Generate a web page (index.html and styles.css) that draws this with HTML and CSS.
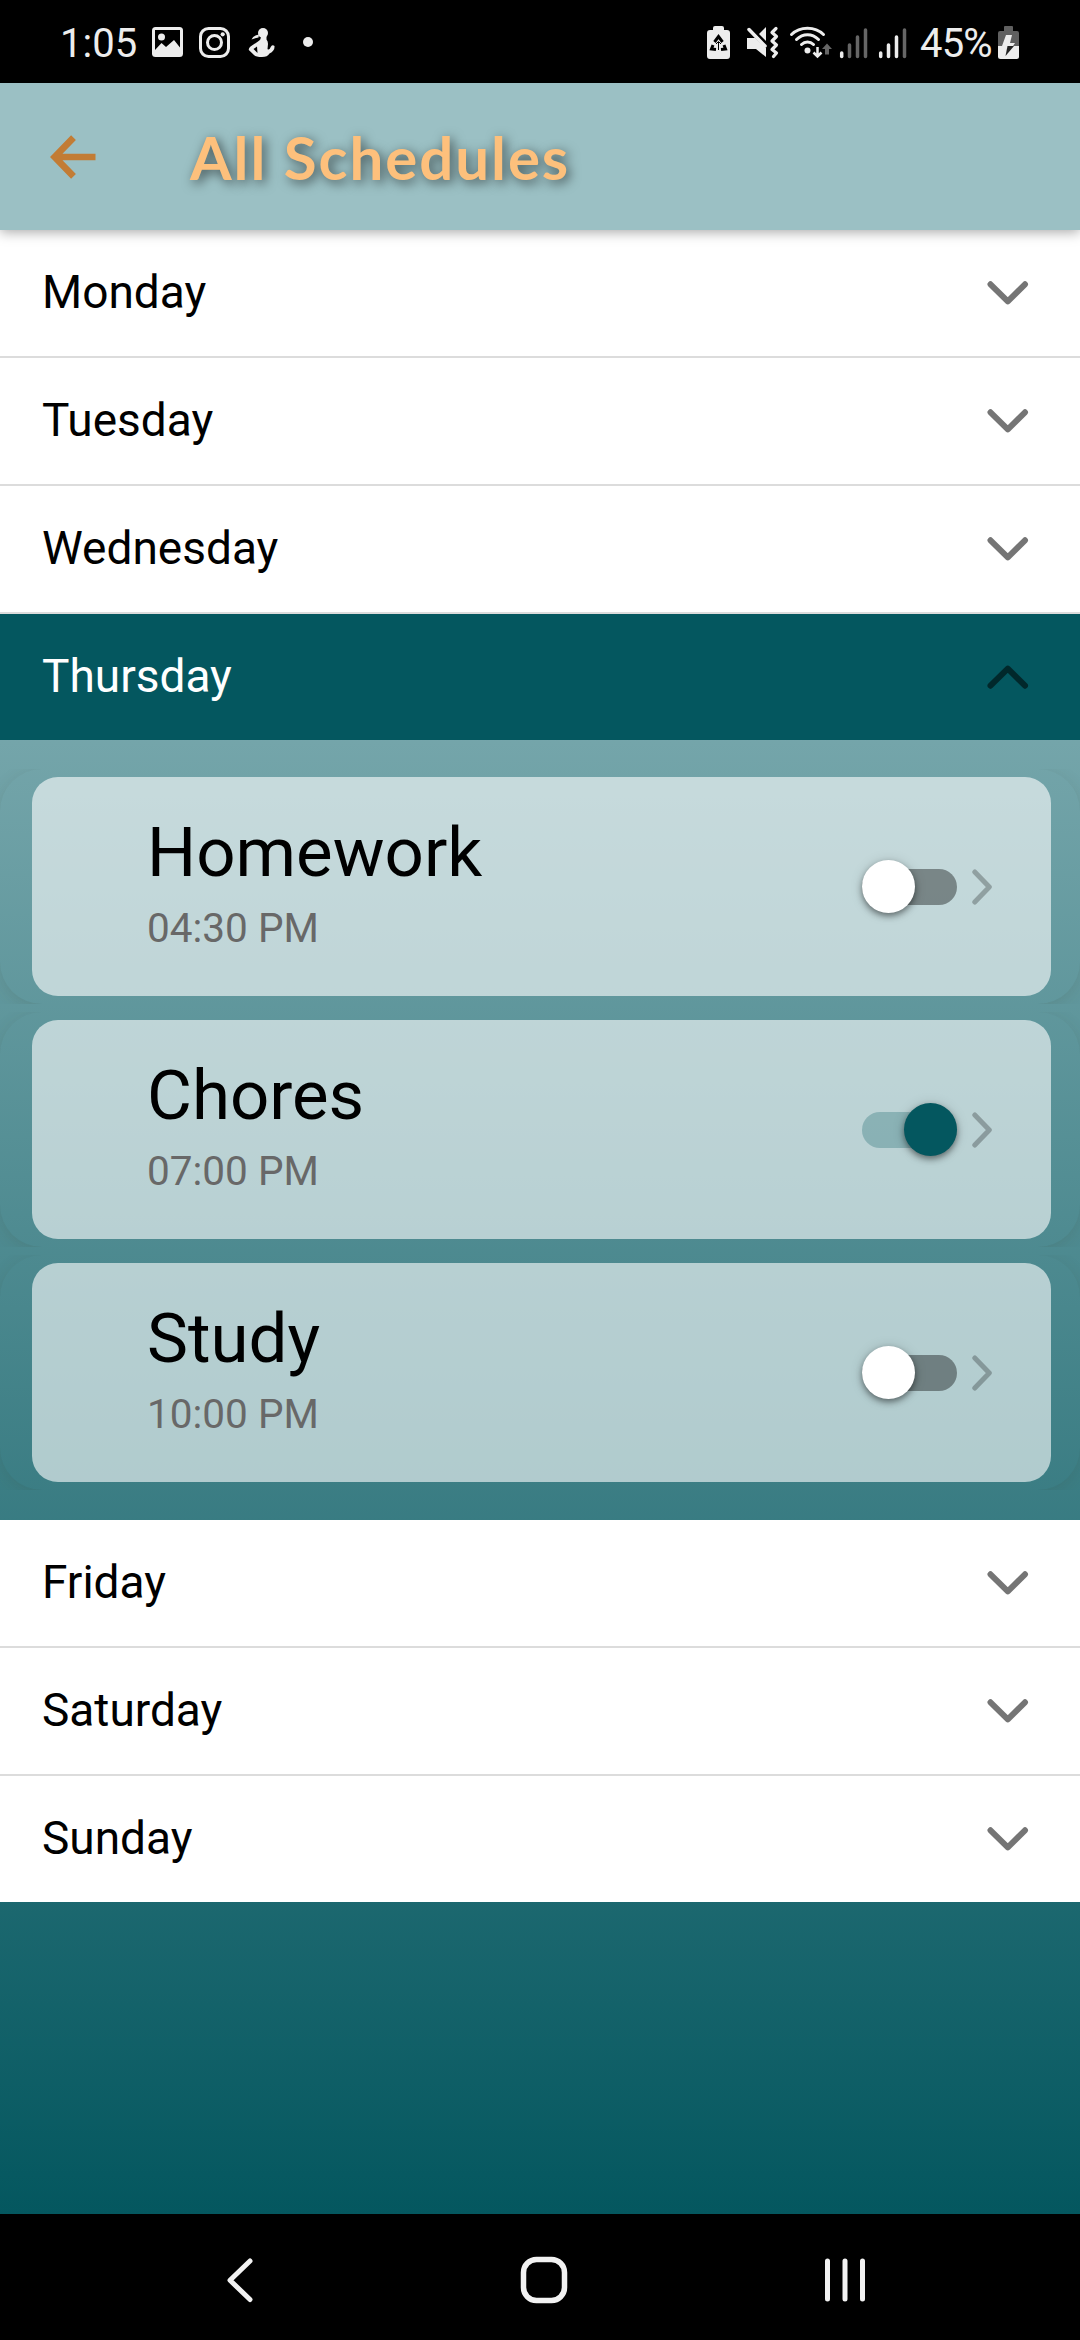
FILE: index.html
```html
<!DOCTYPE html>
<html lang="en">
<head>
<meta charset="utf-8">
<title>All Schedules</title>
<link rel="stylesheet" href="styles.css">
</head>
<body>
<svg class="defs" width="0" height="0" aria-hidden="true">
  <symbol id="down" viewBox="0 0 42 26"><path d="M3.5 4.3 20.8 21.3 38 4.3"/></symbol>
  <symbol id="up" viewBox="0 0 42 26"><path d="M3.5 21.7 20.8 4.7 38 21.7"/></symbol>
  <symbol id="next" viewBox="0 0 20 36"><path d="M2.8 3 17.3 18 2.8 33"/></symbol>
</svg>
<div class="screen">
  <div class="status">
    <div class="group">
      <span class="clock">1:05</span>
      <svg width="45" height="83" viewBox="145 0 45 83"><rect x="152" y="27" width="31" height="30" rx="3.5" fill="#ededed"/><path d="M155 30H180V47.500L174 40 166 47 161.500 43 155 50Z" fill="#000"/><circle cx="161.500" cy="37" r="3.500" fill="#ededed"/></svg>
      <svg width="50" height="83" viewBox="190 0 50 83"><g fill="none" stroke="#ededed" stroke-width="3"><rect x="200.500" y="28.500" width="28" height="28" rx="8"/><circle cx="214.500" cy="42.500" r="7"/></g><circle cx="222.700" cy="34.300" r="2.100" fill="#ededed"/></svg>
      <svg width="45" height="83" viewBox="240 0 45 83"><g fill="#ededed"><circle cx="263" cy="33" r="5"/><path d="M261 36H266.500V39.500Q268 41 268 44L267.500 49Q269 51 271 46.500 272.500 44.500 274.500 46 275 51 269.500 53.500 267.500 57 262 57 256 57 254 55L248.800 50Q248.500 48 250.500 46.500L258 41.500Q261 40 261 36Z"/><path d="M251.500 39.500Q253 35.500 259 34.500L258.500 37.500Q255 38 251.500 39.500Z"/></g><path d="M253.500 49 257 46.500 257.500 53Z" fill="#000"/></svg>
      <svg width="35" height="83" viewBox="285 0 35 83"><circle cx="308" cy="42" r="5" fill="#ededed"/></svg>
    </div>
    <div class="group">
      <svg width="38" height="83" viewBox="700 0 38 83"><path d="M713 30V28Q713 26 715 26H722Q724 26 724 28V30H727Q730 30 730 33V56Q730 59 727 59H710Q707 59 707 56V33Q707 30 710 30Z" fill="#ededed"/><path d="M714.500 42 718.500 36.500 722.500 42M724 45 725.500 49 721 49.500M716 49.500 711.500 49 713 45" fill="none" stroke="#000" stroke-width="3"/><path d="M718.500 42V50M716 44 718.500 41.500 721 44" fill="none" stroke="#000" stroke-width="1"/></svg>
      <svg width="46" height="83" viewBox="738 0 46 83"><path d="M747 38H755L766 48V57L756 49H747Z" fill="#ededed"/><path d="M759 34 766 27V41Z" fill="#ededed"/><path d="M749 29.500 765 46" stroke="#ededed" stroke-width="3.500" stroke-linecap="round"/><path d="M776 28.500 772 32.500 776.500 36.500 772 41 776.500 45 772 49.500 776.500 53 773.500 56.500" fill="none" stroke="#ededed" stroke-width="3.200" stroke-linejoin="round" stroke-linecap="round"/></svg>
      <svg width="52" height="83" viewBox="784 0 52 83"><g fill="none" stroke="#ededed" stroke-width="3" stroke-linecap="round"><path d="M791.500 34.500C800 26 815 26 823.500 34.500M796.500 39.500C803 33 812 33 818.500 39.500M801.500 44.500C805 41 810 41 813.500 44.500"/></g><circle cx="807.500" cy="50.500" r="3" fill="#ededed"/><path d="M817.500 47V56M813.500 52.500 817.500 56.500 821.500 52.500" fill="none" stroke="#ededed" stroke-width="2.500"/><path d="M825 54.500V49H822L827 43.500 832 49H829V54.500Z" fill="#666"/></svg>
      <svg width="36" height="83" viewBox="836 0 36 83"><g stroke-width="3.500" stroke-linecap="round" stroke="#666"><path stroke="#ededed" d="M841.700 53V56.500"/><path d="M849.500 45V56.500M857.500 37V56.500M865.500 30V56.500"/></g></svg>
      <svg width="40" height="83" viewBox="872 0 40 83"><g stroke-width="3.500" stroke-linecap="round" stroke="#ededed"><path d="M880.700 53V56.500M888.500 45V56.500M896.500 37V56.500"/><path stroke="#666" d="M904.500 30V56.500"/></g></svg>
      <span class="percent">45%</span>
      <svg width="33" height="83" viewBox="992 0 33 83"><path d="M998 46V33Q998 31 1000 31H1004V27Q1004 26 1005 26H1012Q1013 26 1013 27V31H1017Q1019 31 1019 33V46Z" fill="#606060"/><path d="M998 46H1019V56.500Q1019 59 1016.500 59H1000.500Q998 59 998 56.500Z" fill="#ededed"/><path d="M1006 35H1012L1010 43H1015L1013 46 1005 56 1007 46H1002Z" fill="#ededed"/><path d="M1014 46 1005.500 56 1007.500 46Z" fill="#222"/></svg>
    </div>
  </div>
  <header class="appbar">
    <svg class="back" width="46" height="44" viewBox="0 0 46 44"><path d="M23.500 2.600 4.700 22 23.500 41.400M5 22H45.500"/></svg>
    <h1>All Schedules</h1>
  </header>
  <main>
    <div class="day"><span>Monday</span><svg class="chev"><use href="#down"/></svg></div>
    <div class="day"><span>Tuesday</span><svg class="chev"><use href="#down"/></svg></div>
    <div class="day"><span>Wednesday</span><svg class="chev"><use href="#down"/></svg></div>
    <div class="day open"><span>Thursday</span><svg class="chev"><use href="#up"/></svg></div>
    <section class="tasks">
      <div class="slot"><article class="card"><div class="info"><h2>Homework</h2><p>04:30 PM</p></div><div class="switch"><i></i></div><svg class="next"><use href="#next"/></svg></article></div>
      <div class="slot"><article class="card"><div class="info"><h2>Chores</h2><p>07:00 PM</p></div><div class="switch on"><i></i></div><svg class="next"><use href="#next"/></svg></article></div>
      <div class="slot"><article class="card"><div class="info"><h2>Study</h2><p>10:00 PM</p></div><div class="switch"><i></i></div><svg class="next"><use href="#next"/></svg></article></div>
    </section>
    <div class="day"><span>Friday</span><svg class="chev"><use href="#down"/></svg></div>
    <div class="day"><span>Saturday</span><svg class="chev"><use href="#down"/></svg></div>
    <div class="day last"><span>Sunday</span><svg class="chev"><use href="#down"/></svg></div>
  </main>
  <nav class="navbar">
    <svg width="48" height="48" viewBox="0 0 48 48"><path d="M31 5 11 24.300 31 43.500" stroke-width="5"/></svg>
    <svg width="48" height="48" viewBox="0 0 48 48"><rect x="3.500" y="3.500" width="41" height="41" rx="13" stroke-width="5.500"/></svg>
    <svg width="48" height="48" viewBox="0 0 48 48"><path d="M6.500 5V43M24 5V43M41.500 5V43" stroke-width="5"/></svg>
  </nav>
</div>
</body>
</html>
```
FILE: styles.css
```css
* { box-sizing: border-box; }
body { margin: 0; font-family: Roboto, sans-serif; }
h1, h2, p { margin: 0; font-weight: 400; }
svg { display: block; flex: none; }
.defs { position: absolute; }

.screen {
  display: flex;
  flex-direction: column;
  width: 1080px;
  height: 2340px;
  overflow: hidden;
}

.status {
  display: flex;
  justify-content: space-between;
  height: 83px;
  padding-left: 60px;
  padding-right: 55px;
  background: #000;
  color: #ededed;
  font-size: 40px;
  line-height: 88px;
}
.group { display: flex; }
.clock { width: 85px; }
.percent { width: 80px; padding-left: 8px; letter-spacing: -.8px; white-space: nowrap; }

.appbar {
  display: flex;
  align-items: center;
  z-index: 1;
  height: 147px;
  padding-left: 50px;
  background: #9bc0c4;
  box-shadow: 0 2px 12px rgba(0, 0, 0, .35);
}
.back { fill: none; stroke: #c27c35; stroke-width: 6.7px; }
h1 {
  margin-left: 94px;
  color: #fdc07c;
  font: 700 60px/72px "Century Gothic", "URW Gothic", Lato, sans-serif;
  letter-spacing: 1.95px;
  text-shadow: 3px 3px 12px rgba(0, 0, 0, .6);
  white-space: nowrap;
}

main {
  flex: 1;
  background: linear-gradient(#9bc0c4, #04575f);
}
.day {
  display: flex;
  align-items: center;
  justify-content: space-between;
  height: 128px;
  padding: 0 51px 0 42px;
  border-bottom: 2px solid #dcdcdc;
  background: #fff;
  color: #000;
  font-size: 46px;
}
.day span { padding-bottom: 2px; }
.day.open { height: 126px; border: 0; background: #04575f; color: #fff; }
.day.last { height: 126px; border: 0; }
.chev {
  width: 42px;
  height: 26px;
  fill: none;
  stroke: rgba(0, 0, 0, .54);
  stroke-width: 6px;
  stroke-linecap: round;
  stroke-linejoin: round;
}

.tasks {
  display: flex;
  flex-direction: column;
  gap: 8px;
  height: 780px;
  padding-top: 29px;
}
.slot {
  position: relative;
  height: 235px;
  padding: 8px 29px 8px 32px;
  overflow: hidden;
}
.slot::before {
  content: "";
  position: absolute;
  inset: 0;
  border-radius: 42px;
  box-shadow: 0 4px 16px rgba(60, 60, 40, .13);
}
.card {
  display: flex;
  align-items: center;
  height: 219px;
  padding: 0 59px 0 115px;
  border-radius: 26px;
  background: rgba(255, 255, 255, .6);
}
.info { flex: 1; padding-bottom: 8px; }
h2 { color: #000; font-size: 69px; line-height: 80px; }
p { margin-top: 11px; color: #686868; font-size: 40.5px; line-height: 48px; }

.switch {
  display: flex;
  align-items: center;
  width: 95px;
  height: 36px;
  border-radius: 18px;
  background: rgba(0, 0, 0, .38);
}
.switch i {
  width: 53px;
  height: 53px;
  flex: none;
  border-radius: 50%;
  background: #fff;
  box-shadow: 0 3px 6px rgba(0, 0, 0, .45), 0 1px 14px rgba(0, 0, 0, .12);
}
.switch.on { justify-content: flex-end; background: rgba(4, 87, 95, .27); }
.switch.on i { background: #04575f; }
.next {
  width: 20px;
  height: 36px;
  margin-left: 15px;
  fill: none;
  stroke: rgba(0, 0, 0, .26);
  stroke-width: 5px;
  stroke-linecap: round;
  stroke-linejoin: round;
}

.navbar {
  display: flex;
  align-items: center;
  justify-content: space-between;
  height: 126px;
  padding: 6px 211px 0 219px;
  background: #000;
}
.navbar svg { fill: none; stroke: #f2f2f2; stroke-linecap: round; stroke-linejoin: round; }
```
